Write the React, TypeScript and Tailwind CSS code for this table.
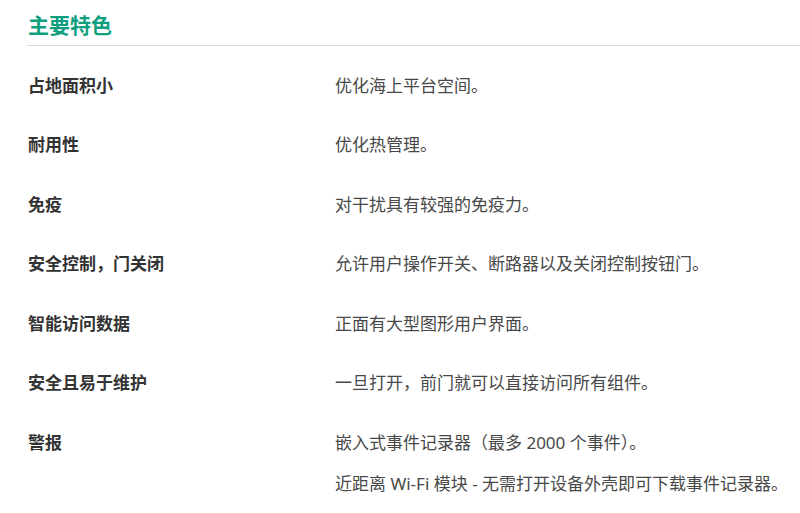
import React from "react";

interface Feature {
    label: string;
    lines: string[];
}

const features: Feature[] = [
    { label: "占地面积小", lines: ["优化海上平台空间。"] },
    { label: "耐用性", lines: ["优化热管理。"] },
    { label: "免疫", lines: ["对干扰具有较强的免疫力。"] },
    { label: "安全控制，门关闭", lines: ["允许用户操作开关、断路器以及关闭控制按钮门。"] },
    { label: "智能访问数据", lines: ["正面有大型图形用户界面。"] },
    { label: "安全且易于维护", lines: ["一旦打开，前门就可以直接访问所有组件。"] },
    {
        label: "警报",
        lines: [
            "嵌入式事件记录器（最多 2000 个事件）。",
            "近距离 Wi-Fi 模块 - 无需打开设备外壳即可下载事件记录器。",
        ],
    },
];

const FeatureRow: React.FC<Feature> = ({ label, lines }) => {
    return (
        <div className="flex py-[17.75px] leading-[24px] text-[17px]">
            <div className="w-[307px] shrink-0 font-bold text-[#333]">{label}</div>
            <div className="flex flex-col gap-[17.5px] text-[#484848]">
                {lines.map((line) => (
                    <p key={line}>{line}</p>
                ))}
            </div>
        </div>
    );
};

export default function App() {
    return (
        <div
            className="w-[800px] h-[513px] overflow-hidden bg-white pl-[28px]"
            style={{ fontFamily: '"Noto Sans", "Noto Sans CJK SC", sans-serif' }}
        >
            {/* Header */}
            <h2 className="pt-[11px] pb-[6px] text-[21px] leading-[28px] font-bold text-[#0f9f80] border-b border-[#dcdcdc] -ml-px pl-px">
                主要特色
            </h2>
            {/* Rows */}
            <div className="pt-[10px]">
                {features.map((f) => (
                    <FeatureRow key={f.label} label={f.label} lines={f.lines} />
                ))}
            </div>
        </div>
    );
}
